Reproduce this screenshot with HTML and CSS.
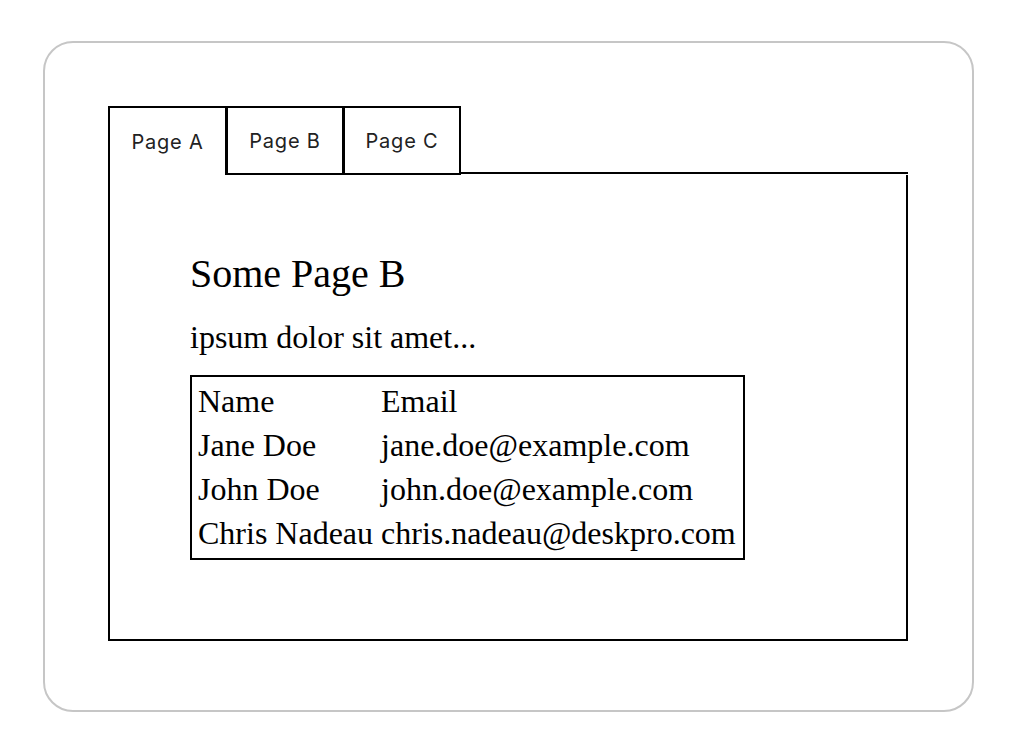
FILE: index.html
```html
<!DOCTYPE html>
<html>
<head>
<meta charset="utf-8">
<link rel="stylesheet" href="styles.css">
</head>
<body>
<div class="frame">
  <div class="window">
    <div class="tabs">
      <div class="tab tab-active">Page A</div>
      <div class="tab">Page B</div>
      <div class="tab">Page C</div>
      <div class="tab-fill"></div>
    </div>
    <div class="panel">
      <h1 class="title">Some Page B</h1>
      <p class="lead">ipsum dolor sit amet...</p>
      <table class="people">
        <tr><td>Name</td><td>Email</td></tr>
        <tr><td>Jane Doe</td><td>jane.doe@example.com</td></tr>
        <tr><td>John Doe</td><td>john.doe@example.com</td></tr>
        <tr><td>Chris Nadeau</td><td>chris.nadeau@deskpro.com</td></tr>
      </table>
    </div>
  </div>
</div>
</body>
</html>
```
FILE: styles.css
```css
html, body {
  margin: 0;
  padding: 0;
  background: #fff;
}
.frame {
  box-sizing: border-box;
  margin: 41px 0 0 43px;
  width: 931px;
  height: 671px;
  border: 2px solid #c6c6c6;
  border-radius: 30px;
  padding: 63px 0 0 63px;
}
.window {
  box-sizing: border-box;
  width: 800px;
  height: 535px;
  display: flex;
  flex-direction: column;
}
.tabs {
  display: flex;
  height: 69px;
  flex: none;
}
.tab {
  box-sizing: border-box;
  height: 69px;
  width: 117px;
  border: 2px solid #000;
  border-left-width: 1px;
  display: flex;
  align-items: center;
  justify-content: center;
  font-family: "Inter", "Open Sans", sans-serif;
  font-size: 20px;
  letter-spacing: 0.8px;
  color: #222;
}
.tab-active {
  border-left-width: 2px;
  border-bottom: none;
  width: 119px;
}
.tab-fill {
  flex: 1;
  border-bottom: 2px solid #000;
  margin-bottom: 1px;
}
.panel {
  flex: 1;
  border: 2px solid #000;
  border-top: none;
  padding: 76px 0 0 80px;
  font-family: "Liberation Serif", "Times New Roman", serif;
  color: #000;
}
.title {
  margin: 0;
  font-size: 40px;
  line-height: 46px;
  font-weight: normal;
}
.lead {
  margin: 22px 0 19px;
  font-size: 32px;
  line-height: 37px;
}
.people {
  border: 2px solid #000;
  border-collapse: separate;
  border-spacing: 0;
  padding: 2px 0 3px;
  font-size: 32px;
}
.people td {
  padding: 4px 5px 4px 6px;
  line-height: 36px;
  white-space: nowrap;
}
.people td + td {
  padding-left: 3px;
  padding-right: 7px;
}
```
